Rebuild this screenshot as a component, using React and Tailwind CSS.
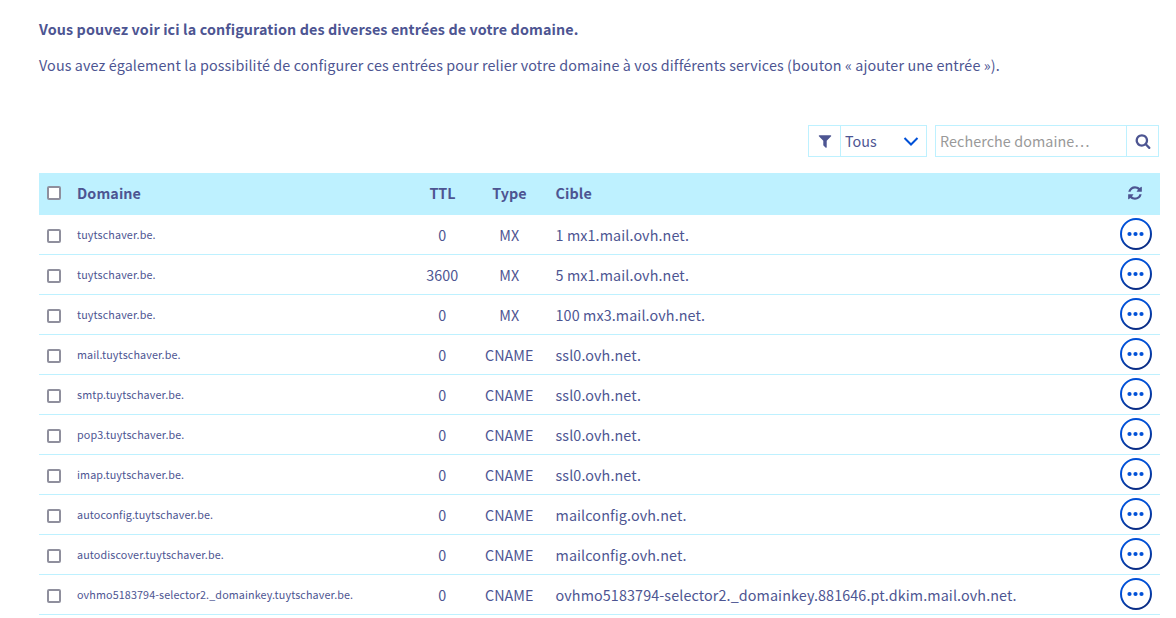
import { useState } from 'react';

const RECORDS = [
  { id: 1, domain: 'tuytschaver.be.', ttl: 0, type: 'MX', target: '1 mx1.mail.ovh.net.' },
  { id: 2, domain: 'tuytschaver.be.', ttl: 3600, type: 'MX', target: '5 mx1.mail.ovh.net.' },
  { id: 3, domain: 'tuytschaver.be.', ttl: 0, type: 'MX', target: '100 mx3.mail.ovh.net.' },
  { id: 4, domain: 'mail.tuytschaver.be.', ttl: 0, type: 'CNAME', target: 'ssl0.ovh.net.' },
  { id: 5, domain: 'smtp.tuytschaver.be.', ttl: 0, type: 'CNAME', target: 'ssl0.ovh.net.' },
  { id: 6, domain: 'pop3.tuytschaver.be.', ttl: 0, type: 'CNAME', target: 'ssl0.ovh.net.' },
  { id: 7, domain: 'imap.tuytschaver.be.', ttl: 0, type: 'CNAME', target: 'ssl0.ovh.net.' },
  { id: 8, domain: 'autoconfig.tuytschaver.be.', ttl: 0, type: 'CNAME', target: 'mailconfig.ovh.net.' },
  { id: 9, domain: 'autodiscover.tuytschaver.be.', ttl: 0, type: 'CNAME', target: 'mailconfig.ovh.net.' },
  { id: 10, domain: 'ovhmo5183794-selector2._domainkey.tuytschaver.be.', ttl: 0, type: 'CNAME', target: 'ovhmo5183794-selector2._domainkey.881646.pt.dkim.mail.ovh.net.' },
];

const ICONS = {
  filter: 'M1595 295q17 41-14 70l-493 493v742q0 42-39 59-13 5-25 5-27 0-45-19l-256-256q-19-19-19-45v-486l-493-493q-31-29-14-70 17-39 59-39h1280q42 0 59 39z',
  search: 'M1216 832q0-185-131.5-316.5t-316.5-131.5-316.5 131.5-131.5 316.5 131.5 316.5 316.5 131.5 316.5-131.5 131.5-316.5zm512 832q0 52-38 90t-90 38q-54 0-90-38l-343-342q-179 124-399 124-143 0-273.5-55.5t-225-150-150-225-55.5-273.5 55.5-273.5 150-225 225-150 273.5-55.5 273.5 55.5 225 150 150 225 55.5 273.5q0 220-124 399l343 343q37 37 37 90z',
  refresh: 'M1639 1056q0 5-1 7-64 268-268 434.5t-478 166.5q-146 0-282.5-55t-243.5-157l-129 129q-19 19-45 19t-45-19-19-45v-448q0-26 19-45t45-19h448q26 0 45 19t19 45-19 45l-137 137q71 66 161 102t187 36q134 0 250-65t186-179q11-17 53-117 8-23 30-23h192q13 0 22.5 9.5t9.5 22.5zm25-800v448q0 26-19 45t-45 19h-448q-26 0-45-19t-19-45 19-45l138-138q-148-137-349-137-134 0-250 65t-186 179q-11 17-53 117-8 23-30 23h-199q-13 0-22.5-9.5t-9.5-22.5v-7q65-268 270-434.5t480-166.5q146 0 284 55.5t245 156.5l130-129q19-19 45-19t45 19 19 45z',
};

function Icon({ name, className }) {
  return (
    <svg viewBox="0 0 1792 1792" fill="currentColor" className={`size-4 ${className || ''}`}>
      <path d={ICONS[name]} />
    </svg>
  );
}

function Checkbox({ checked, onChange, className }) {
  return (
    <input
      type="checkbox"
      checked={checked}
      onChange={onChange}
      className={`block size-3.5 appearance-none rounded-[2px] border-2 border-[#8f8f9d] bg-white checked:bg-[#0050d7] ${className || ''}`}
    />
  );
}

function ActionsButton() {
  return (
    <button aria-label="Actions" className="mb-px block size-8">
      <svg viewBox="0 0 32 32" className="size-8">
        <defs>
          <linearGradient id="ring" x1="0.3" y1="0" x2="0.7" y2="1">
            <stop offset="0.3" stopColor="#0050d7" />
            <stop offset="0.9" stopColor="#0a2d86" />
          </linearGradient>
        </defs>
        <circle cx="16" cy="16" r="15" fill="#fff" stroke="url(#ring)" strokeWidth="2" />
        <g fill="#0050d7">
          <circle cx="9.5" cy="16" r="2.1" />
          <circle cx="15.5" cy="16" r="2.1" />
          <circle cx="21.5" cy="16" r="2.1" />
        </g>
      </svg>
    </button>
  );
}

export default function App() {
  const [selected, setSelected] = useState([]);
  const [query, setQuery] = useState('');

  const toggle = id => setSelected(s => (s.includes(id) ? s.filter(i => i !== id) : [...s, id]));
  const toggleAll = () => setSelected(s => (s.length === RECORDS.length ? [] : RECORDS.map(r => r.id)));

  return (
    <div className="h-[618px] overflow-hidden bg-white pl-[39px] pr-4 pt-[17px] font-['Noto_Sans_CJK_SC',sans-serif] text-[14.33px] leading-6 text-[#4d5592]">
      <p className="font-bold tracking-[0.11px]">Vous pouvez voir ici la configuration des diverses entrées de votre domaine.</p>
      <p className="mt-3 tracking-[0.114px]">
        Vous avez également la possibilité de configurer ces entrées pour relier votre domaine à vos différents services (bouton « ajouter une entrée »).
      </p>

      <div className="mt-12 mr-px flex justify-end gap-2">
        <div className="flex h-8 w-[119px] border border-[#bef1ff]">
          <div className="flex w-8 items-center justify-center border-r border-[#bef1ff]">
            <Icon name="filter" />
          </div>
          <button className="flex flex-1 items-center justify-between pl-1 pr-[7px]">
            <span>Tous</span>
            <svg viewBox="0 0 16 16" fill="none" stroke="#0050d7" strokeWidth="2" className="size-4">
              <path d="M1.500 5 8 11.500l6.500-6.500" />
            </svg>
          </button>
        </div>
        <div className="flex h-8 w-56 border border-[#bef1ff]">
          <input
            value={query}
            onChange={e => setQuery(e.target.value)}
            placeholder="Recherche domaine…"
            className="min-w-0 flex-1 pl-1 tracking-[0.08px] placeholder-[#999] outline-none"
          />
          <button aria-label="Rechercher" className="flex w-8 items-center justify-center border-l border-[#bef1ff]">
            <Icon name="search" />
          </button>
        </div>
      </div>

      <div className="mt-4">
        <div className="grid h-[42px] grid-cols-[38px_332px_67px_67px_1fr_40px] items-center bg-[#bef1ff] pb-0.5 font-bold">
          <Checkbox checked={selected.length === RECORDS.length} onChange={toggleAll} className="ml-2" />
          <span className="tracking-[0.1px]">Domaine</span>
          <span className="text-center">TTL</span>
          <span className="text-center">Type</span>
          <span className="pl-[12.5px] tracking-[0.1px]">Cible</span>
          <Icon name="refresh" className="ml-[7px]" />
        </div>
        {RECORDS.map(r => (
          <div key={r.id} className="grid h-10 grid-cols-[38px_332px_66.500px_67.500px_1fr_40px] items-center border-b border-[#bef1ff]">
            <Checkbox checked={selected.includes(r.id)} onChange={() => toggle(r.id)} className="ml-2 mt-[3px]" />
            <span className="pt-px text-[10.75px] tracking-[0.12px]">{r.domain}</span>
            <span className="text-center">{r.ttl}</span>
            <span className="text-center">{r.type}</span>
            <span className="pl-[12.5px] tracking-[0.113px]">{r.target}</span>
            <ActionsButton />
          </div>
        ))}
      </div>
    </div>
  );
}
